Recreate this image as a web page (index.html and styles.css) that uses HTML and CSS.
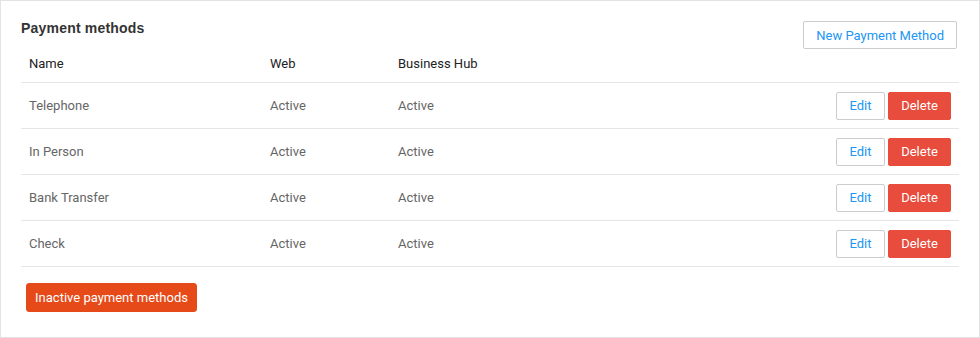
FILE: index.html
```html
<!DOCTYPE html>
<html>

<head>
    <title>Payment methods</title>
    <link rel="stylesheet" href="styles.css">
</head>

<body>
    <div class="panel">
        <div class="panel-head">
            <h3 class="panel-title">Payment methods</h3>
            <button class="btn btn-default">New Payment Method</button>
        </div>
        <table class="methods">
            <thead>
                <tr>
                    <th class="col-name">Name</th>
                    <th class="col-web">Web</th>
                    <th class="col-hub">Business Hub</th>
                    <th></th>
                </tr>
            </thead>
            <tbody>
                <tr>
                    <td>Telephone</td>
                    <td>Active</td>
                    <td>Active</td>
                    <td class="actions"><button class="btn btn-default btn-edit">Edit</button><button class="btn btn-delete">Delete</button></td>
                </tr>
                <tr>
                    <td>In Person</td>
                    <td>Active</td>
                    <td>Active</td>
                    <td class="actions"><button class="btn btn-default btn-edit">Edit</button><button class="btn btn-delete">Delete</button></td>
                </tr>
                <tr>
                    <td>Bank Transfer</td>
                    <td>Active</td>
                    <td>Active</td>
                    <td class="actions"><button class="btn btn-default btn-edit">Edit</button><button class="btn btn-delete">Delete</button></td>
                </tr>
                <tr>
                    <td>Check</td>
                    <td>Active</td>
                    <td>Active</td>
                    <td class="actions"><button class="btn btn-default btn-edit">Edit</button><button class="btn btn-delete">Delete</button></td>
                </tr>
            </tbody>
        </table>
        <!-- Show the disabled ones -->
        <button class="btn btn-inactive">Inactive payment methods</button>
    </div>
</body>

</html>
```

FILE: styles.css
```css
body {
    margin: 0;
    padding: 0;
    font-family: Roboto, "Liberation Sans", Arial, sans-serif;
    font-size: 13px;
    color: #666;
    background: #fff;
}

.panel {
    box-sizing: border-box;
    width: 980px;
    height: 338px;
    border: 1px solid #e3e3e3;
    padding: 20px 20px 0 20px;
}

.panel-head {
    display: flex;
    justify-content: space-between;
    align-items: flex-start;
}

.panel-title {
    margin: 0;
    padding-top: 0;
    font-family: "Liberation Sans", Arial, sans-serif;
    font-size: 14px;
    font-weight: bold;
    color: #333;
    line-height: 14px;
    letter-spacing: 0.2px;
}

.btn {
    box-sizing: border-box;
    height: 28px;
    padding: 0 12px;
    border: 1px solid transparent;
    border-radius: 2px;
    font-family: Roboto, "Liberation Sans", Arial, sans-serif;
    font-size: 13px;
    cursor: pointer;
}

.btn-default {
    background: #fff;
    border-color: #ccc;
    color: #2196f3;
}

.panel-head .btn {
    margin-right: 2px;
}

.methods {
    width: 938px;
    border-collapse: collapse;
    margin-top: 1px;
}

.methods th {
    text-align: left;
    font-weight: normal;
    color: #222;
    height: 26px;
    padding: 0 8px 6px 8px;
    border-bottom: 1px solid #e6e6e6;
}

.methods td {
    height: 45px;
    padding: 0 8px;
    border-bottom: 1px solid #e6e6e6;
}

.col-name {
    width: 225px;
}

.col-web {
    width: 112px;
}

.actions {
    text-align: right;
    padding-right: 8px;
}

.btn-edit {
    width: 49px;
    padding: 0;
}

.btn-delete {
    width: 63px;
    margin-left: 3px;
    padding: 0;
    background: #e74c3c;
    color: #fff;
    border-color: #e74c3c;
}

.btn-inactive {
    margin: 16px 0 0 5px;
    height: 29px;
    width: 171px;
    padding: 0;
    background: #e64a19;
    border-color: #e64a19;
    color: #fff;
    border-radius: 3px;
}
```
